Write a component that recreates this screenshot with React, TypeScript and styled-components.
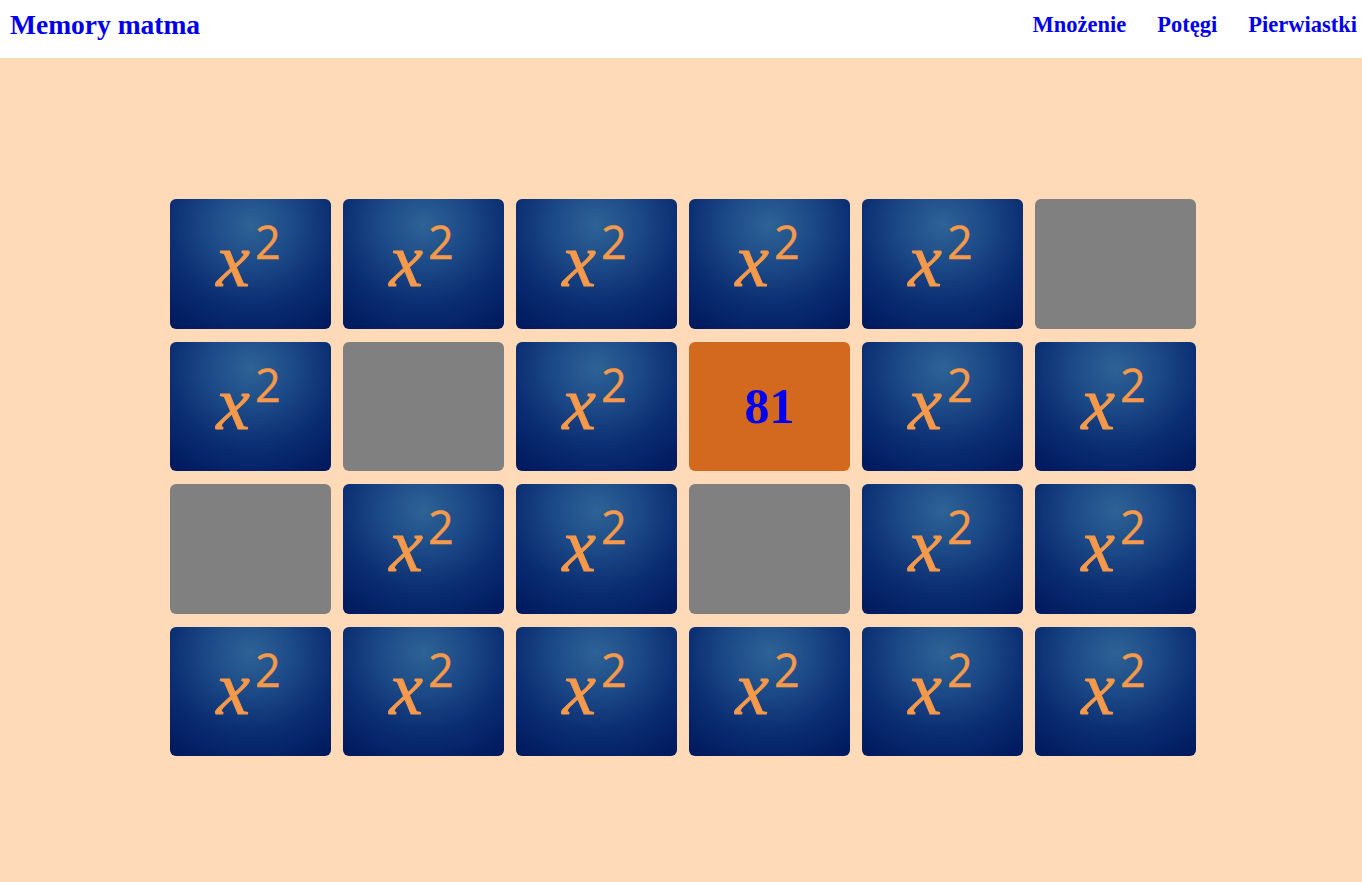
import styled, { createGlobalStyle } from 'styled-components';

type CardState = 'hidden' | 'removed' | 'revealed';

interface CardData {
  state: CardState;
  value?: string;
}

const GlobalStyle = createGlobalStyle`
  html, body {
    margin: 0;
    padding: 0;
    background-color: #ffdab9;
    font-family: "Liberation Serif", "Times New Roman", serif;
  }
`;

const h: CardData = { state: 'hidden' };
const r: CardData = { state: 'removed' };

const cards: CardData[] = [
  h, h, h, h, h, r,
  h, r, h, { state: 'revealed', value: '81' }, h, h,
  r, h, h, r, h, h,
  h, h, h, h, h, h,
];

const navLinks = ['Mnożenie', 'Potęgi', 'Pierwiastki'];

export default function App() {
  return (
    <>
      <GlobalStyle />
      <Header>
        <Title>Memory matma</Title>
        <Nav>
          {navLinks.map((link) => (
            <NavLink key={link}>{link}</NavLink>
          ))}
        </Nav>
      </Header>
      <Main>
        <Board>
          {cards.map((card, i) => (
            <Card key={i} $state={card.state}>
              {card.state === 'hidden' && (
                <Formula>
                  <Variable>x</Variable>
                  <Exponent>2</Exponent>
                </Formula>
              )}
              {card.state === 'revealed' && <Value>{card.value}</Value>}
            </Card>
          ))}
        </Board>
      </Main>
    </>
  );
}

const Header = styled.header`
  height: 58px;
  background-color: #ffffff;

  display: flex;
  align-items: center;
  justify-content: space-between;

  padding: 0 5px 0 10px;
`;

const Title = styled.h1`
  margin: 0;
  padding-bottom: 9px;
  font-size: 27.5px;
  font-weight: bold;
  color: #0000ee;
`;

const Nav = styled.nav`
  display: flex;
  gap: 31px;
  padding-bottom: 9px;
`;

const NavLink = styled.a`
  font-size: 22.5px;
  font-weight: bold;
  color: #0000ee;
  text-decoration: none;
  cursor: pointer;
`;

const Main = styled.main`
  display: flex;
  justify-content: center;
  padding: 141px 0 128px 4px;
`;

const Board = styled.div`
  display: grid;
  grid-template-columns: repeat(6, 161px);
  grid-auto-rows: 129.5px;
  column-gap: 12px;
  row-gap: 13px;
`;

const Card = styled.div<{ $state: CardState }>`
  border-radius: 6px;
  display: flex;
  align-items: center;
  justify-content: center;

  background: ${({ $state }) =>
    $state === 'hidden'
      ? 'radial-gradient(ellipse 80% 95% at 50% 20%, #2e6396 0%, #1b4886 35%, #0b2d72 65%, #001a5f 100%)'
      : $state === 'revealed'
      ? '#d2691e'
      : '#808080'};
`;

const Formula = styled.div`
  display: flex;
  align-items: flex-start;
  height: 78px;
  color: #f5994a;
  margin-top: -7px;
  margin-left: -4px;
`;

const Variable = styled.span`
  font-family: "Liberation Serif", serif;
  font-style: italic;
  font-size: 76px;
  line-height: 78px;
  -webkit-text-stroke: 0.8px #f5994a;
`;

const Exponent = styled.span`
  font-family: "Open Sans", "Noto Sans", sans-serif;
  font-size: 45px;
  line-height: 41px;
  margin-left: 5px;
  -webkit-text-stroke: 0.4px #f5994a;
`;

const Value = styled.span`
  font-size: 50px;
  font-weight: bold;
  color: #0000ee;
`;
